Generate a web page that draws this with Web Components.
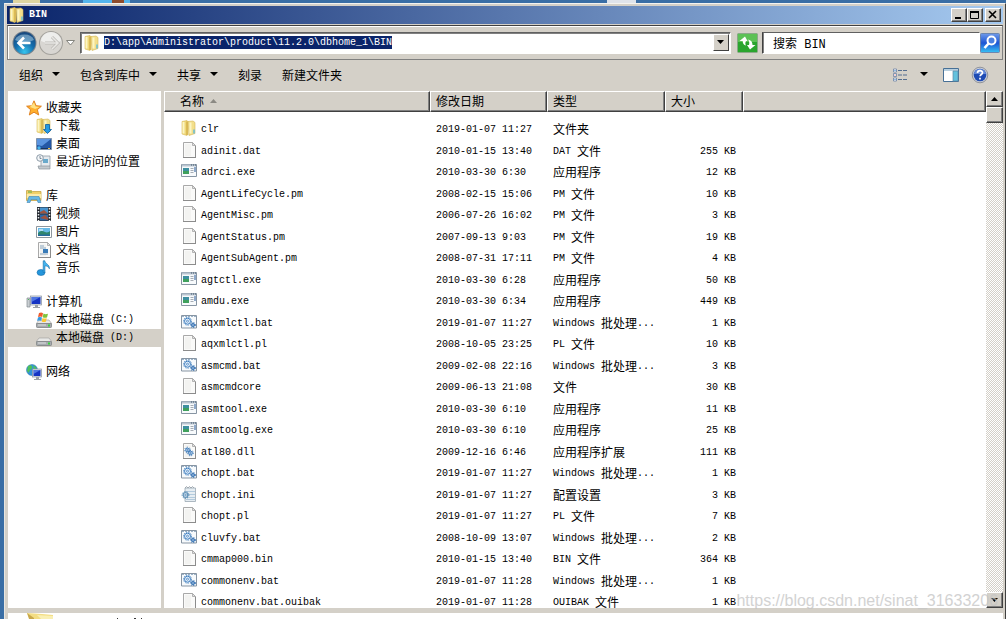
<!DOCTYPE html>
<html lang="zh-CN">
<head>
<meta charset="utf-8">
<title>BIN</title>
<style>
  html, body { height: 100%; margin: 0; }
  body {
    overflow: hidden;
    background: #3a6ea5;
    color: #000;
    font: 10px/18px "Liberation Mono", "Noto Sans CJK SC", monospace;
    --cjk: "Noto Sans CJK SC", "Liberation Sans", sans-serif;
    --face: #d4d0c8;
  }
</style>
</head>
<body>
<explorer-window></explorer-window>
<script>
const sheet = `
  :host, *, *::before, *::after { box-sizing: border-box; }
  button, input { font: inherit; color: inherit; margin: 0; padding: 0; border: 0; background: none; }
  .z { font-family: var(--cjk); font-size: 12px; line-height: 1; vertical-align: -2px; }
  svg { display: block; }
`;
// Wraps Chinese runs so that they take the larger ideograph size.
const mix = s => s.replace(/[\u4e00-\u9fff]+/g, '<span class="z">$&</span>');

function define(name, render) {
  customElements.define(name, class extends HTMLElement {
    connectedCallback() {
      if (this.shadowRoot) return;
      this.attachShadow({ mode: 'open' }).innerHTML = `<style>${sheet}</style>` + render(this);
    }
  });
}

const gear = (x, y, r, c) => `<circle cx="${x}" cy="${y}" r="${r}" fill="#e4effa" stroke="${c}" stroke-width="1"/><circle cx="${x}" cy="${y}" r="${r + 1}" fill="none" stroke="${c}" stroke-dasharray="1.2 1.2"/><circle cx="${x}" cy="${y}" r="${r / 3}" fill="#fff" stroke="${c}" stroke-width=".8"/>`;
const page = `<path d="M2.500.5h9l3 3v12h-12z" fill="#fafaf9" stroke="#a9a9a9"/><path d="M4 2h6v12H4z" fill="#f3f3f1"/><path d="M11.500.5v3h3z" fill="#e2e2e2" stroke="#a3a3a3" stroke-width=".8"/><path d="M2 15.500h13M14.500 4v12" stroke="#8c8c8c"/>`;
const frame = `<path d="M.5 1.500h15v12H.5z" fill="#f7fafc" stroke="#8795a3"/><path d="M1 2.500h14" stroke="#b9c5d0" stroke-width="2"/><path d="M10 2h1M12 2h1M14 2h1" stroke="#405468"/>`;
const folder = `<path d="M1 1.500L6 .5l1 1v13l-1 1-5-1.500z" fill="#f0d878" stroke="#d9bb5c" stroke-width=".6"/><path d="M7 1.500L12 1l2 1.500v11L8 15.500z" fill="#f3df8b" stroke="#d3b657" stroke-width=".6"/><path d="M2.500 2v11.500M9.500 2.500v11" stroke="#fcf5c4" stroke-width="2"/><path d="M6 1.500v13.500" stroke="#d5b24c" stroke-width="1.500"/><path d="M13 9.500v4" stroke="#58b9e0" stroke-width="1.400"/>`;
const monitor = (x, y, w, h) => `<rect x="${x}" y="${y}" width="${w}" height="${h}" fill="#dfe3e8" stroke="#8590a0" stroke-width=".7"/><rect x="${x + 1}" y="${y + 1}" width="${w - 2}" height="${h - 2}" fill="#1534c4"/><path d="M${x + 1} ${y + 1}h${w - 2}L${x + 1} ${y + h - 3}z" fill="#6f9af1" opacity=".65"/><path d="M${x + w / 2 - 1} ${y + h}h3v2h2v1h-7v-1h2z" fill="#9ba1a8"/>`;
const drive = `<path d="M3 8h10l3 4H0z" fill="#e8e8e6" stroke="#9b9b9b" stroke-width=".6"/><rect x=".4" y="11.500" width="15.200" height="4" rx="1" fill="#a7abae" stroke="#73777a" stroke-width=".7"/><path d="M2 13h8" stroke="#dcdfe0"/><path d="M12 12.500h2v2h-2z" fill="#37d43d"/>`;
const icons = {
  folder, page,
  exe: frame + `<path d="M2 5h6v6H2z" fill="#3d8fa0"/><path d="M2 8h6v3H2z" fill="#3fa05d"/><path d="M9.500 5.500h3M9.500 7.500h3M9.500 9.500h3" stroke="#a6adb5"/><path d="M14 4v5" stroke="#245797"/>`,
  bat: `<path d="M.5 1.500h15v12.500H.5z" fill="#f7fafc" stroke="#8795a3"/><path d="M1 2.500h14" stroke="#9db3c8" stroke-dasharray="2 1"/>` + gear(6.5, 7.2, 3, '#3f7fc0') + gear(12, 11, 1.500, '#2d6cb0'),
  dll: page + gear(6.5, 7, 1.8, '#3b79b9') + gear(9.5, 10, 1.8, '#3b79b9'),
  ini: `<path d="M4 2h10.500v13.500H4z" fill="#e6edf2" stroke="#9aa8b2" stroke-width=".8"/><path d="M4 2l1.500-1.500L7 2 8.500.5 10 2 11.500.5 13 2" fill="none" stroke="#929ca4" stroke-width=".8"/><path d="M5 5.500h9M5 8.500h9M5 11.500h9M5 13.500h9" stroke="#b2cadd"/>` + gear(4.5, 9, 2.4, '#447fac'),
  star: `<path d="M8 .8l2.100 4.900 5.300.5-4 3.500 1.300 5.300L8 12.200 3.300 15l1.300-5.300-4-3.500 5.300-.5z" fill="#ffb02e" stroke="#dc7a17" stroke-width=".9"/><path d="M8 2.500l1.500 4 4 .4-4.500 2L8 8.500 4 7z" fill="#ffe184"/>`,
  download: folder + `<path d="M9.500 6.500h4v5h2l-4 4-4-4h2z" fill="#279be2" stroke="#0d5d9f" stroke-width=".8"/>`,
  desktop: `<path d="M.5 2.500h15v11H.5z" fill="#2457a5" stroke="#8093ab"/><path d="M1 3h14L6 10 1 9z" fill="#5b94df"/><path d="M1 12.500h14" stroke="#17325e"/><circle cx="3" cy="12" r="1.700" fill="#48b6ee"/><path d="M12 12h2v1h-2z" fill="#efc045"/>`,
  recent: `<path d="M5 2h9v10l-3 2H5z" fill="#e5eaee" stroke="#929ca5" stroke-width=".8"/><path d="M7 5h5v4H7z" fill="#69a9cb"/><path d="M2 12h12v3H3z" fill="#c4cace" stroke="#89939b" stroke-width=".7"/><circle cx="4" cy="4" r="3.300" fill="#f4f6f8" stroke="#8d9ba8"/><path d="M4 2v2.500h1.500" fill="none" stroke="#617487" stroke-width=".8"/>`,
  library: `<path d="M.5 2.500h5l1 1h8.500v9H.5z" fill="#f0d169" stroke="#c8a445" stroke-width=".8"/><path d="M2 4h4" stroke="#56a744"/><path d="M.8 6h14.400v4H.8z" fill="#fbebaa"/><path d="M3 8.500h10l2 6h-3l-1-3H5l-1 3H1z" fill="#66b8e8" stroke="#3d84b4" stroke-width=".6"/>`,
  video: `<path d="M1 1h14v14H1z" fill="#272b32"/><path d="M4 1.500h8v6H4z" fill="#4793ce"/><path d="M4 8.500h8v6H4z" fill="#2c6aab"/><path d="M4 6l4-2 4 3.500H4zM4 12l5-3 3 3v2z" fill="#9d5440"/><path d="M2.500 2v13M13.500 2v13" stroke="#eef2f4" stroke-width="1.500" stroke-dasharray="1.500 1.500"/>`,
  picture: `<path d="M.5 2.500h15v11H.5z" fill="#fff" stroke="#8e979e"/><path d="M2 4h12v8H2z" fill="#68bae8"/><path d="M2 9c3-3 5-2 7-1s4 0 5-1v5H2z" fill="#30866d"/><path d="M2 10.500h12V12H2z" fill="#276b9e"/><path d="M3 6h4" stroke="#fff"/>`,
  document: page + `<path d="M4 4h4M4 6h6M4 12h8" stroke="#89a5be"/><path d="M7 7h5v4H7z" fill="#397bb8"/>`,
  music: `<ellipse cx="5" cy="12.500" rx="4" ry="3" fill="#2496dc" stroke="#176da9" stroke-width=".6"/><path d="M7.200 12.500V.8h1.700c0 3 5 3.500 4.500 8-.8-2-2.500-2.800-4.500-3v6.700z" fill="#42b4ef" stroke="#176da9" stroke-width=".6"/>`,
  computer: `<path d="M1 4h3v9H1z" fill="#c9ced2" stroke="#828a91" stroke-width=".7"/><path d="M2 5.500h1" stroke="#47bd57"/>` + monitor(4.5, 2, 11, 9),
  driveC: drive + `<path d="M3 1c2-1 3-.5 4 .2L6.200 5C5 4.200 4 4.200 2 5z" fill="#ef5b2c"/><path d="M7.500 1.500c1.500.8 2.500.8 4.500.2l-1 3.700c-2 .7-3 .5-4.300-.2z" fill="#7fc43b"/><path d="M2 5.500c1.500-.7 2.800-.6 4 0L5.200 9C4 8.300 3 8.500 1 9z" fill="#379ae3"/><path d="M6.500 6c1.500.7 2.500.7 4.300.2l-1 3.500c-2 .5-3 .3-4-.3z" fill="#fdc52f"/>`,
  driveD: drive,
  network: `<circle cx="6" cy="6" r="5.500" fill="#3094dc" stroke="#216ba9" stroke-width=".5"/><path d="M2 2c3-2 5 0 4 2S3 6 3 9L1 7zM7 1l4 3-3 2z" fill="#4fc05a"/>` + monitor(6.5, 5, 9, 8),
};

define('os-icon', el => `<style>:host{display:block;flex:none;width:16px;height:16px;white-space:normal}</style><svg width="16" height="16" viewBox="0 0 16 16" aria-hidden="true">${icons[el.getAttribute('name')]}</svg>`);

define('title-bar', () => `<style>
  :host { display:flex; align-items:center; height:18px; padding:0 2px; background:linear-gradient(90deg,#0a246a,#a6caf0); color:#fff; }
  h1 { margin:0 auto 0 4px; font-size:10px; font-weight:bold; line-height:18px; }
  button { width:16px; height:14px; background:var(--face); border:1px solid; border-color:#fff #404040 #404040 #fff; display:grid; place-items:center; box-shadow:inset -1px -1px #808080; }
  .close { margin-left:2px; }
</style>
<os-icon name="folder"></os-icon><h1>BIN</h1>
<button aria-label="最小化"><svg width="12" height="10"><path d="M2 8h6" stroke="#000" stroke-width="2"/></svg></button>
<button aria-label="最大化"><svg width="12" height="10"><path d="M1.500 1v7.500h8V1M1 1.500h9" fill="none" stroke="#000"/><path d="M1 1h9v2H1z"/></svg></button>
<button class="close" aria-label="关闭"><svg width="12" height="10"><path d="M2 1l7 7M9 1L2 8" stroke="#000" stroke-width="1.600"/></svg></button>`);

define('address-bar', () => `<style>
  :host { display:flex; align-items:center; height:35px; padding:0 2px 0 4px; background:var(--face); border:1px solid #808080; border-top-color:#404040; box-shadow:inset 1px 1px #fff; margin-top:1px; }
  .nav { display:flex; align-items:center; }
  .nav button { display:block; }
  .path { flex:1; display:flex; align-items:center; height:22px; margin-left:4px; padding:0 1px 0 3px; background:#fff; border:1px solid; border-color:#606060 #fff #fff #606060; box-shadow:inset 1px 1px #808080; }
  .path input { width:288px; height:13px; margin-left:4px; background:#0a246a; color:#fff; line-height:13px; outline:0; }
  .drop { width:16px; height:17px; margin-left:auto; background:var(--face); border:1px solid; border-color:#fff #404040 #404040 #fff; display:grid; place-items:center; }
  .refresh { margin:0 4px 0 6px; }
  .search { width:218px; height:22px; padding:0 10px; background:#fff; border:1px solid; border-color:#606060 #fff #fff #404040; box-shadow:inset 1px 0 #808080; font:12px/20px "Liberation Mono","Noto Sans CJK SC",monospace; outline:0; }
</style>
<div class="nav">
<button aria-label="后退"><svg width="26" height="28" viewBox="0 0 26 28"><defs><radialGradient id="b" cx=".5" cy=".9" r=".9"><stop stop-color="#38c5ee"/><stop offset=".5" stop-color="#146cab"/><stop offset="1" stop-color="#1a477b"/></radialGradient></defs><circle cx="12.500" cy="14" r="12" fill="#79838c"/><circle cx="12.500" cy="14" r="11" fill="url(#b)"/><path d="M3 11a10 8 0 0 1 19 0c-7 3-13 3-19 0z" fill="#b5d5e8" opacity=".5"/><path d="M12 8.500l-5.500 5.500 5.500 5.500M7 14h11.500" fill="none" stroke="#fff" stroke-width="2.600"/></svg></button>
<button aria-label="前进"><svg width="27" height="28" viewBox="0 0 27 28"><circle cx="13" cy="14" r="12" fill="#a3a19c"/><circle cx="13" cy="14" r="11" fill="#d8d6d2"/><path d="M3 12a10 9 0 0 1 20 0c-7 3-13 3-20 0z" fill="#eeeeec"/><path d="M14 8l6 6-6 6M19 14H7" fill="none" stroke="#bbb9b5" stroke-width="3"/><path d="M14 8l6 6-6 6M19 14H7" fill="none" stroke="#e9e8e5" stroke-width="1.500"/></svg></button>
<button aria-label="最近的页面"><svg width="11" height="10"><path d="M1.500 2.500h8L5.500 7z" fill="#fff" stroke="#85857f"/></svg></button>
</div>
<div class="path"><os-icon name="folder"></os-icon><input aria-label="地址" value="D:\\app\\Administrator\\product\\11.2.0\\dbhome_1\\BIN" spellcheck="false">
<button class="drop" aria-label="以前的位置"><svg width="8" height="5"><path d="M0 0h7L3.500 4z"/></svg></button></div>
<button class="refresh" aria-label="刷新"><svg width="21" height="20" viewBox="0 0 21 20"><rect x=".5" y=".5" width="20" height="19" rx="1" fill="#2aa52e" stroke="#8aa888"/><path d="M1 1h19v8H1z" fill="#69c85f" opacity=".8"/><path d="M8 3.500L2.500 8h3.200c0 2.500 1 4 3.300 4.500-.8-1.500-.9-3 0-4.500h1.500z" fill="#fff"/><path d="M13 16.500l5.500-4.500h-3c0-3-1.500-5-4.500-5.500 1.200 1.500 1.700 3.500 1 5.500h-2z" fill="#fff"/></svg></button>
<input class="search" aria-label="搜索" value="搜索 BIN" spellcheck="false">
<button aria-label="开始搜索"><svg width="20" height="20" viewBox="0 0 20 20"><defs><linearGradient id="s" x2="0" y2="1"><stop stop-color="#719be9"/><stop offset=".5" stop-color="#1c55d4"/><stop offset="1" stop-color="#38c2f4"/></linearGradient></defs><rect x=".5" y=".5" width="19" height="19" rx="1" fill="url(#s)" stroke="#6c86b0"/><circle cx="11.500" cy="7.500" r="4" fill="#4b7fe0" stroke="#fff" stroke-width="2"/><path d="M8.500 10.500L4.500 15" stroke="#fff" stroke-width="2.600"/></svg></button>`);

define('tool-bar', () => {
  const arrow = '<svg width="8" height="5"><path d="M0 0h8L4 4z"/></svg>';
  const b = (t, a) => `<button><span class="z">${t}</span>${a ? arrow : ''}</button>`;
  return `<style>
  :host { display:flex; align-items:center; gap:20px; height:31px; padding:0 14px 2px 12px; background:var(--face); }
  button { display:flex; align-items:center; gap:9px; height:20px; }
  .right { display:flex; align-items:center; gap:12px; margin-left:auto; }
  .view { margin-right:3px; }
  </style>${b('组织', 1)}${b('包含到库中', 1)}${b('共享', 1)}${b('刻录')}${b('新建文件夹')}
  <div class="right">
  <button aria-label="更改您的视图"><svg width="16" height="14" viewBox="0 0 16 14"><path d="M1.500 1h3v3h-3zM1.500 5.500h3v3h-3zM1.500 10h3v3h-3z" fill="#fff" stroke="#6a82a5" stroke-width=".8"/><path d="M2.500 2.500h1M2.500 11.500h1" stroke="#297dca"/><path d="M2.500 7h1" stroke="#d64a3d"/><path d="M6 2.500h4M11 2.500h4M6 7h4M11 7h4M6 11.500h4M11 11.500h4" stroke="#536d8f" stroke-width="1.200"/></svg></button>
  <button class="view" aria-label="更多选项">${arrow}</button>
  <button aria-label="显示预览窗格"><svg width="16" height="14"><path d="M.5.5h15v13H.5z" fill="#fff" stroke="#477096"/><path d="M1 2h14" stroke="#b8cfdf" stroke-width="2"/><path d="M10 3h5v10h-5z" fill="#63c1dd" stroke="#6089a7" stroke-width=".7"/></svg></button>
  <button aria-label="获取帮助"><svg width="18" height="18" viewBox="0 0 18 18"><circle cx="9" cy="9" r="7.800" fill="#c9cdd6" stroke="#82858e" stroke-width=".8"/><circle cx="9" cy="9" r="6.300" fill="#1e4bb4"/><path d="M3 8a6 5 0 0 1 12 0z" fill="#6489d9"/><path d="M6.500 7c0-3 5-3 5-.3 0 1.800-2.400 1.800-2.400 3.600M9 11.800v1.800" fill="none" stroke="#fff" stroke-width="1.700"/></svg></button>
  </div>`;
});

define('nav-tree', () => {
  const groups = [
    ['收藏夹', 'star', ['下载', 'download'], ['桌面', 'desktop'], ['最近访问的位置', 'recent']],
    ['库', 'library', ['视频', 'video'], ['图片', 'picture'], ['文档', 'document'], ['音乐', 'music']],
    ['计算机', 'computer', ['本地磁盘 (C:)', 'driveC'], ['本地磁盘 (D:)', 'driveD']],
    ['网络', 'network'],
  ];
  const link = (t, i, c = '') => `<a href="#" class="${c}"><os-icon name="${i}"></os-icon><span>${mix(t)}</span></a>`;
  return `<style>
  :host { display:flex; flex-direction:column; gap:16px; width:153px; flex:none; padding-top:8px; background:#fff; overflow:hidden; }
  a { display:flex; align-items:center; gap:4px; height:18px; padding-left:18px; color:#000; text-decoration:none; white-space:nowrap; }
  .sub { padding-left:28px; }
  .on { background:var(--face); }
  </style>` + groups.map(([t, i, ...kids]) => `<section>${link(t, i)}${kids.map(([kt, ki]) => link(kt, ki, 'sub' + (ki === 'driveD' ? ' on' : ''))).join('')}</section>`).join('');
});

define('file-list', () => {
  const W = 'Windows 批处理...', A = '应用程序', P = 'PM 文件';
  const rows = [
    ['folder', 'clr', '2019-01-07 11:27', '文件夹', ''],
    ['page', 'adinit.dat', '2010-01-15 13:40', 'DAT 文件', 255],
    ['exe', 'adrci.exe', '2010-03-30 6:30', A, 12],
    ['page', 'AgentLifeCycle.pm', '2008-02-15 15:06', P, 10],
    ['page', 'AgentMisc.pm', '2006-07-26 16:02', P, 3],
    ['page', 'AgentStatus.pm', '2007-09-13 9:03', P, 19],
    ['page', 'AgentSubAgent.pm', '2008-07-31 17:11', P, 4],
    ['exe', 'agtctl.exe', '2010-03-30 6:28', A, 50],
    ['exe', 'amdu.exe', '2010-03-30 6:34', A, 449],
    ['bat', 'aqxmlctl.bat', '2019-01-07 11:27', W, 1],
    ['page', 'aqxmlctl.pl', '2008-10-05 23:25', 'PL 文件', 10],
    ['bat', 'asmcmd.bat', '2009-02-08 22:16', W, 3],
    ['page', 'asmcmdcore', '2009-06-13 21:08', '文件', 30],
    ['exe', 'asmtool.exe', '2010-03-30 6:10', A, 11],
    ['exe', 'asmtoolg.exe', '2010-03-30 6:10', A, 25],
    ['dll', 'atl80.dll', '2009-12-16 6:46', '应用程序扩展', 111],
    ['bat', 'chopt.bat', '2019-01-07 11:27', W, 1],
    ['ini', 'chopt.ini', '2019-01-07 11:27', '配置设置', 3],
    ['page', 'chopt.pl', '2019-01-07 11:27', 'PL 文件', 7],
    ['bat', 'cluvfy.bat', '2008-10-09 13:07', W, 2],
    ['page', 'cmmap000.bin', '2010-01-15 13:40', 'BIN 文件', 364],
    ['bat', 'commonenv.bat', '2019-01-07 11:28', W, 1],
    ['page', 'commonenv.bat.ouibak', '2019-01-07 11:28', 'OUIBAK 文件', 1],
  ];
  return `<style>
  :host { display:block; flex:1; min-width:0; overflow:hidden; background:#fff; }
  table { width:100%; table-layout:fixed; border-collapse:separate; border-spacing:0; }
  th, td { padding:0 0 0 6px; text-align:left; font-weight:normal; white-space:nowrap; vertical-align:middle; }
  th { height:21px; line-height:18px; background:var(--face); border:1px solid; border-color:#fff #404040 #404040 #fff; box-shadow:inset -1px -1px #808080; }
  th:first-child { padding-left:15px; }
  th:first-child svg { display:inline-block; margin-left:6px; }
  th:nth-child(2), th:nth-child(3), th:nth-child(4) { padding-left:5px; }
  td { height:22px; line-height:18px; }
  tr:nth-child(even) td { height:21px; }
  tbody tr:first-child td { height:29px; padding-top:7px; }
  .name { display:flex; align-items:center; gap:4px; padding-left:11px; }
  td:first-child { padding-left:6px; }
  .name os-icon { margin:-2px 0 2px; }
  td:nth-child(4) { text-align:right; padding-right:7px; }
  .n { width:266px } .d { width:117px } .t { width:118px } .s { width:78px }
  </style>
  <table><colgroup><col class="n"><col class="d"><col class="t"><col class="s"><col></colgroup>
  <thead><tr><th scope="col"><span class="z">名称</span><svg width="7" height="6"><path d="M0 5l3.500-4L7 5z" fill="#8b8983"/></svg></th><th scope="col"><span class="z">修改日期</span></th><th scope="col"><span class="z">类型</span></th><th scope="col"><span class="z">大小</span></th><th></th></tr></thead>
  <tbody>${rows.map(([i, n, d, t, s]) => `<tr><td><div class="name"><os-icon name="${i}"></os-icon><span>${n}</span></div></td><td>${d}</td><td>${mix(t)}</td><td>${s ? s + ' KB' : ''}</td><td></td></tr>`).join('')}</tbody></table>`;
});

define('scroll-bar', () => `<style>
  :host { display:flex; flex-direction:column; flex:none; width:17px; background:repeating-conic-gradient(#fff 0 25%,var(--face) 0 50%) 0 0/2px 2px; }
  button, .thumb { height:16px; width:100%; flex:none; background:var(--face); border:1px solid; border-color:#fff #404040 #404040 #fff; box-shadow:inset -1px -1px #808080; display:grid; place-items:center; }
  .down { margin-top:auto; }
</style>
<button aria-label="向上滚动"><svg width="7" height="4"><path d="M0 4l3.500-4L7 4z"/></svg></button><div class="thumb"></div>
<button class="down" aria-label="向下滚动"><svg width="7" height="4"><path d="M0 0h7L3.500 4z"/></svg></button>`);

define('details-pane', () => `<style>
  :host { display:flex; align-items:flex-start; gap:64px; height:6px; flex:none; padding-left:19px; background:#fff; overflow:hidden; }
</style>
<svg width="26" height="6"><path d="M0 0l15 1 11 1v4H3z" fill="#f3dd83"/><path d="M0 0l7 5v1H2z" fill="#c9a94b"/><path d="M10 2l16 1v3H14z" fill="#faf0b4"/></svg>
<svg width="32" height="6"><path d="M0 5h1v1H0zM17 5h2v1h-2zM24 5h1v1h-1z" fill="#333"/></svg>`);

define('explorer-window', () => `<style>
  :host { display:flex; flex-direction:column; height:100vh; padding:3px 0 0 4px; position:relative; background:#3a6ea5; }
  .desk { position:absolute; left:0; top:0; }
  .win { flex:1; min-height:0; display:flex; flex-direction:column; background:var(--face); border-right:1px solid #404040; border-left:1px solid #e8e6e0; border-top:1px solid #f4f3f0; padding:2px 2px 0 2px; }
  .main { flex:1; min-height:0; display:flex; margin-left:1px; }
  .split { width:3px; flex:none; background:var(--face); }
  details-pane { margin:5px 0 0 1px; }
  .mark { position:absolute; right:8px; bottom:9px; font:16px/18px "Liberation Sans",sans-serif; color:#c4c4c4; opacity:.75; }
</style>
<svg class="desk" width="700" height="3" aria-hidden="true"><path d="M13 0h27v3H13z" fill="#ddd5a0"/><path d="M83 0h47v3H83z" fill="#55b5ec"/><path d="M112 0h12v3h-12z" fill="#8d4c2c"/><path d="M607 0h29v3h-29z" fill="#dfe3ea"/></svg>
<div class="win">
<title-bar></title-bar>
<address-bar></address-bar>
<tool-bar></tool-bar>
<div class="main"><nav-tree></nav-tree><div class="split"></div><file-list></file-list><scroll-bar></scroll-bar></div>
<details-pane></details-pane>
</div>
<div class="mark">https://blog.csdn.net/sinat_31633206</div>`);
</script>
</body>
</html>
